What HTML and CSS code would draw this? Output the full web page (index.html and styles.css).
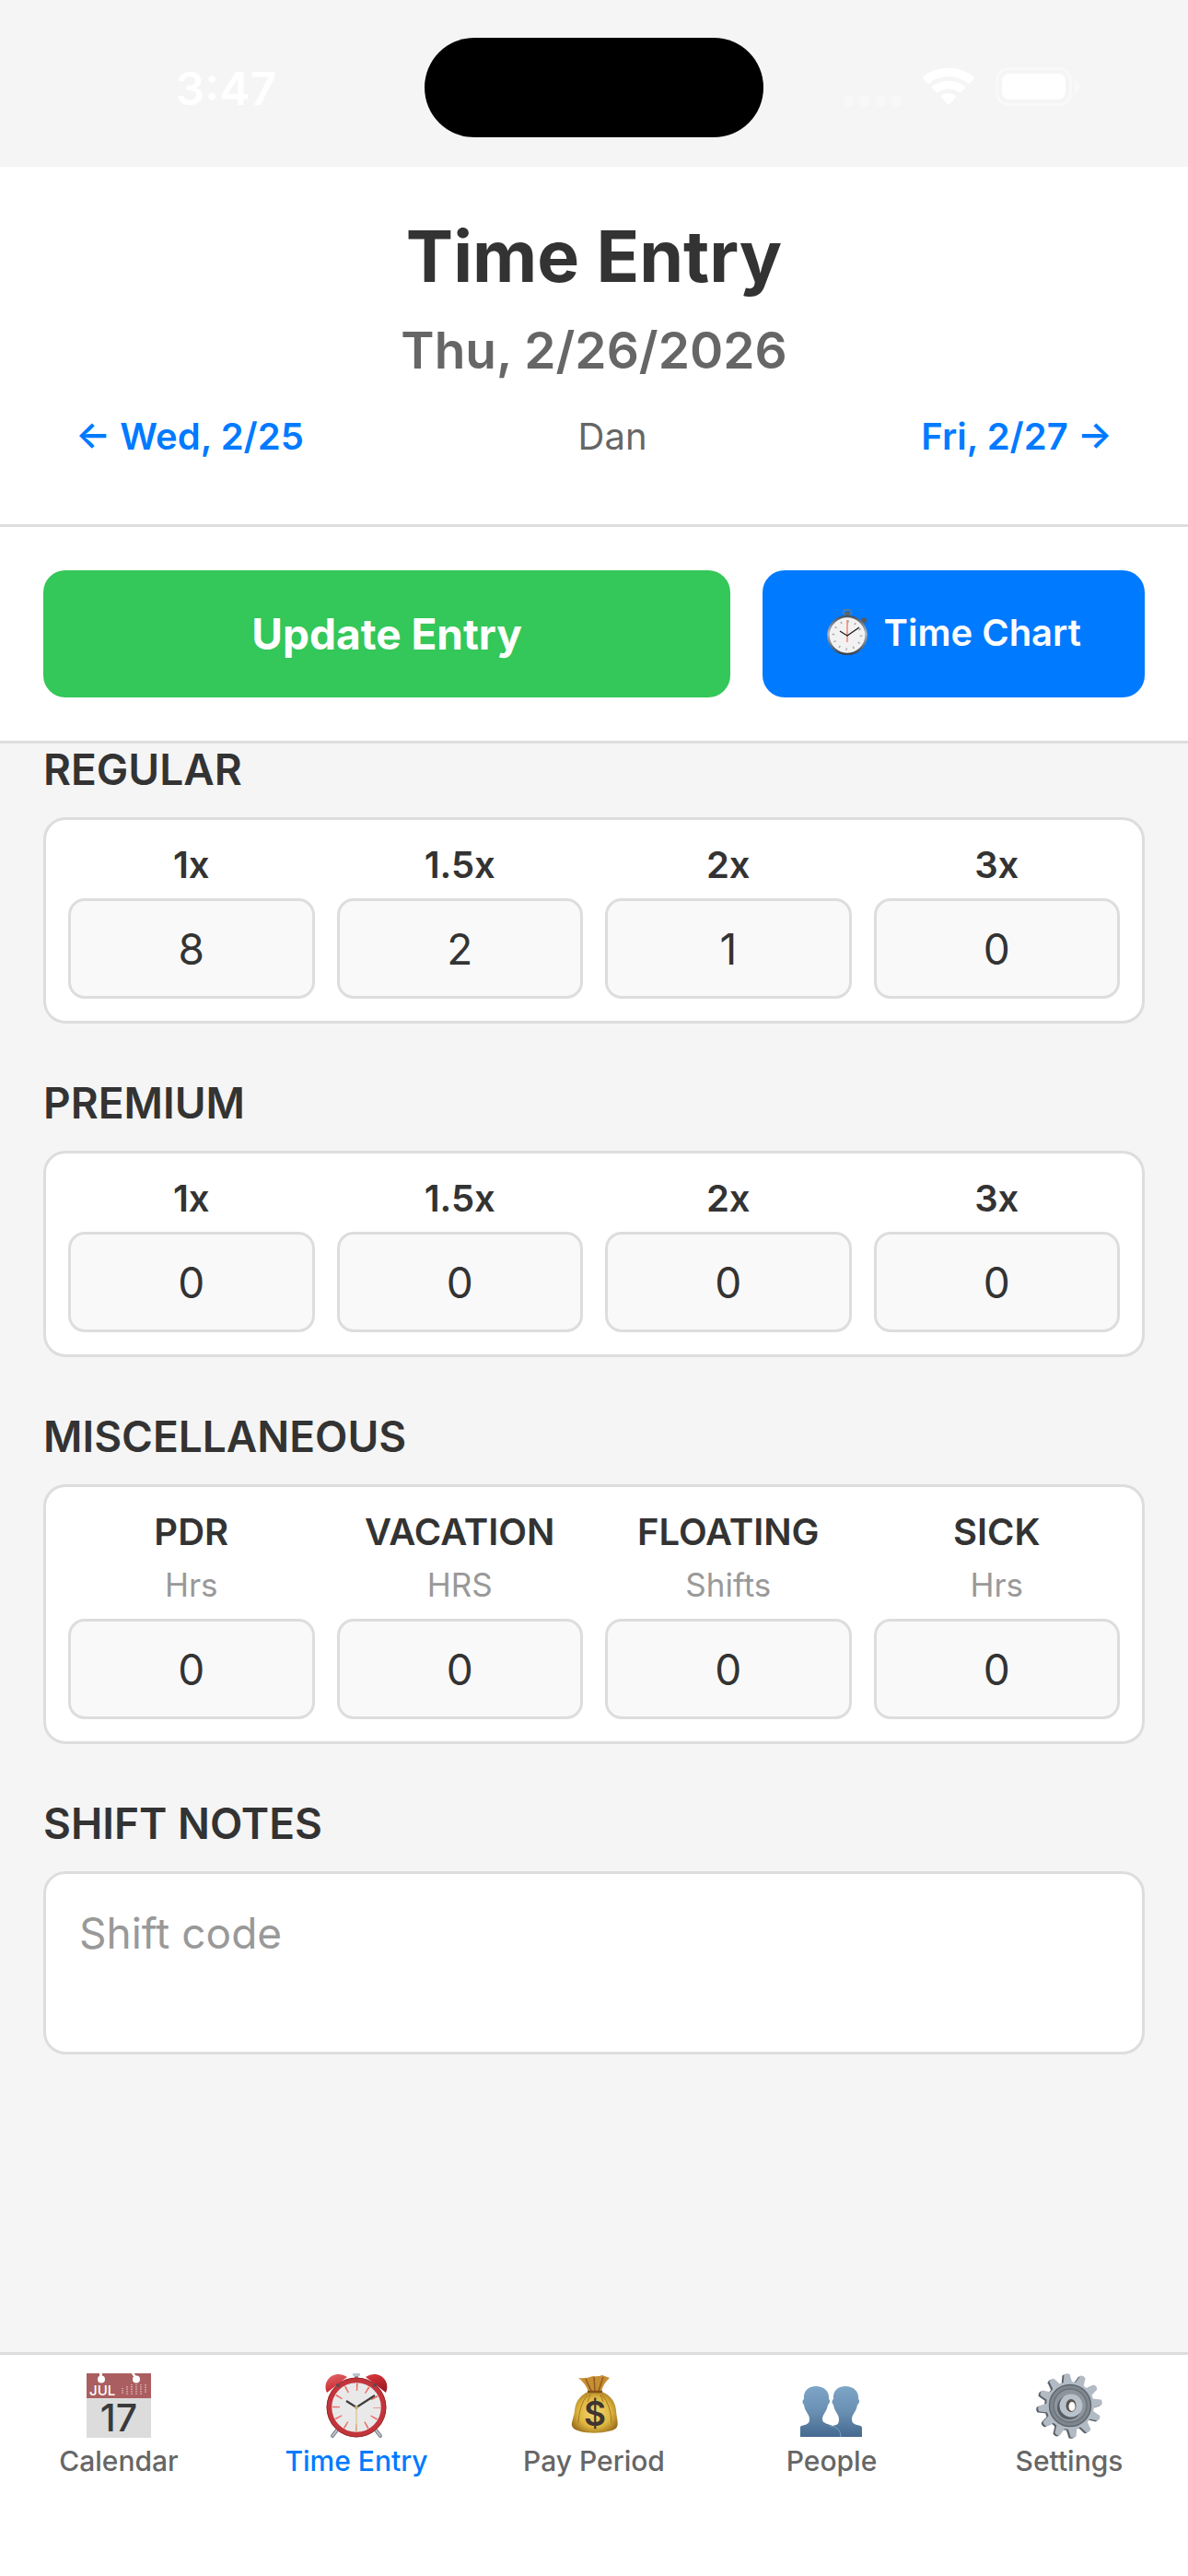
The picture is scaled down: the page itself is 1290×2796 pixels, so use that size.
FILE: index.html
```html
<!DOCTYPE html>
<html lang="en">
<head>
    <meta charset="UTF-8">
    <meta name="viewport" content="width=device-width, initial-scale=1.0">
    <title>Time Entry</title>
    <link rel="stylesheet" href="styles.css">
</head>
<body>
    <div class="status-bar">
        <div class="status-time">3:47</div>
        <div class="island"></div>
        <div class="status-icons">
            <svg width="260" height="44" viewBox="0 0 260 44" fill="#fff">
                <g opacity="0.35">
                    <rect x="5" y="31" width="11" height="11" rx="4"/>
                    <rect x="22" y="31" width="11" height="11" rx="4"/>
                    <rect x="40" y="31" width="11" height="11" rx="4"/>
                    <rect x="57" y="31" width="11" height="11" rx="4"/>
                </g>
                <path d="M92 13Q90.500 11.500 92 10C108 -2.500 130 -2.500 146 10Q147.500 11.500 146 13L142.500 17Q141 18 139.500 17C127 7.500 111 7.500 98.500 17Q97 18 95.500 17Z"/>
                <path d="M101.500 23Q100.300 21.700 101.700 20.500C111.500 12.800 126.500 12.800 136.300 20.500Q137.700 21.700 136.500 23L132.700 26.800Q131.500 27.800 130 26.800C123.500 22 114.500 22 108 26.800Q106.500 27.800 105.300 26.800Z"/>
                <path d="M111.200 32.700Q110 31.500 111.500 30.400C116 27.500 122 27.500 126.500 30.400Q128 31.500 126.800 32.700L120.500 39.500Q119 41 117.500 39.500Z"/>
                <rect x="171.500" y="1.500" width="80" height="39" rx="13" fill="none" stroke="#fff" stroke-width="3" opacity="0.4"/>
                <rect x="177" y="7" width="69" height="28" rx="8"/>
                <path d="M256 14v14q5-2 5-7t-5-7z" opacity="0.45"/>
            </svg>
        </div>
    </div>

    <header class="header">
        <h1>Time Entry</h1>
        <h2>Thu, 2/26/2026</h2>
        <div class="day-nav">
            <button type="button" class="day-link">← Wed, 2/25</button>
            <span class="user-name">Dan</span>
            <button type="button" class="day-link">Fri, 2/27 →</button>
        </div>
    </header>

    <div class="actions">
        <button type="button" class="btn btn-update">Update Entry</button>
        <button type="button" class="btn btn-chart">
            <svg width="44" height="50" viewBox="0 0 44 50">
                <defs>
                    <linearGradient id="watchRim" x1="0" y1="0" x2="0" y2="1">
                        <stop offset="0" stop-color="#4d5560"/>
                        <stop offset="0.45" stop-color="#b4b9c0"/>
                        <stop offset="1" stop-color="#394552"/>
                    </linearGradient>
                </defs>
                <ellipse cx="22" cy="3.500" rx="4.500" ry="3" fill="none" stroke="#6f7b86" stroke-width="1.500"/>
                <rect x="19.500" y="3" width="5" height="6" rx="1" fill="#59636e"/>
                <path d="M37 15l4-5" stroke="#5c6068" stroke-width="3"/>
                <rect x="37.500" y="9.500" width="6" height="5" rx="2" fill="#555a63" transform="rotate(35 40 12)"/>
                <circle cx="22" cy="28.500" r="20.500" fill="#f2f2f2" stroke="url(#watchRim)" stroke-width="2.500"/>
                <circle cx="22" cy="28.500" r="15" fill="none" stroke="#aaa" stroke-width="2.500" stroke-dasharray="1.500 6.354"/>
                <path d="M22 12v24" stroke="#ee6a4b" stroke-width="1.200"/>
                <path d="M14 24l8 5 13-9" fill="none" stroke="#222" stroke-width="1.400"/>
            </svg>
            <span>Time Chart</span>
        </button>
    </div>

    <main class="content">
        <section class="section">
            <h3>REGULAR</h3>
            <div class="card">
                <div class="field">
                    <label for="reg1">1x</label>
                    <input type="text" id="reg1" value="8">
                </div>
                <div class="field">
                    <label for="reg15">1.5x</label>
                    <input type="text" id="reg15" value="2">
                </div>
                <div class="field">
                    <label for="reg2">2x</label>
                    <input type="text" id="reg2" value="1">
                </div>
                <div class="field">
                    <label for="reg3">3x</label>
                    <input type="text" id="reg3" value="0">
                </div>
            </div>
        </section>

        <section class="section">
            <h3>PREMIUM</h3>
            <div class="card">
                <div class="field">
                    <label for="prem1">1x</label>
                    <input type="text" id="prem1" value="0">
                </div>
                <div class="field">
                    <label for="prem15">1.5x</label>
                    <input type="text" id="prem15" value="0">
                </div>
                <div class="field">
                    <label for="prem2">2x</label>
                    <input type="text" id="prem2" value="0">
                </div>
                <div class="field">
                    <label for="prem3">3x</label>
                    <input type="text" id="prem3" value="0">
                </div>
            </div>
        </section>

        <section class="section">
            <h3>MISCELLANEOUS</h3>
            <div class="card">
                <div class="field">
                    <label for="pdr">PDR</label>
                    <span class="unit">Hrs</span>
                    <input type="text" id="pdr" value="0">
                </div>
                <div class="field">
                    <label for="vacation">VACATION</label>
                    <span class="unit">HRS</span>
                    <input type="text" id="vacation" value="0">
                </div>
                <div class="field">
                    <label for="floating">FLOATING</label>
                    <span class="unit">Shifts</span>
                    <input type="text" id="floating" value="0">
                </div>
                <div class="field">
                    <label for="sick">SICK</label>
                    <span class="unit">Hrs</span>
                    <input type="text" id="sick" value="0">
                </div>
            </div>
        </section>

        <section class="section">
            <h3><label for="notes">SHIFT NOTES</label></h3>
            <textarea id="notes" placeholder="Shift code"></textarea>
        </section>
    </main>

    <nav class="tab-bar">
        <a href="#calendar" class="tab">
            <svg class="tab-icon" viewBox="0 0 72 72">
                <rect x="1" y="1" width="70" height="28" fill="#ab5e60"/>
                <rect x="1" y="28" width="70" height="43" fill="#dcdcdc"/>
                <path d="M15 0h3v6h-3zM49 0h3l4 6h-3z" fill="#fff"/>
                <circle cx="17" cy="7.500" r="4" fill="#fff"/>
                <circle cx="55" cy="7.500" r="4" fill="#fff"/>
                <path d="M40 23v-6M45 24v-9M50 24v-11M55 24v-11M60 24v-11M65 22v-9" stroke="#cf9c9d" stroke-width="2" stroke-dasharray="1.500 1"/>
                <text x="4" y="25" class="cal-month">JUL</text>
                <text x="36" y="64" class="cal-day">17</text>
            </svg>
            <span>Calendar</span>
        </a>
        <a href="#time-entry" class="tab active">
            <svg class="tab-icon" viewBox="0 0 72 72">
                <defs>
                    <linearGradient id="bell" x1="0" y1="0" x2="1" y2="1">
                        <stop offset="0" stop-color="#e0696b"/>
                        <stop offset="0.5" stop-color="#cc2c33"/>
                        <stop offset="1" stop-color="#8f1820"/>
                    </linearGradient>
                </defs>
                <path d="M17 60l-7 9M55 60l7 9" stroke="#7f8891" stroke-width="4" stroke-linecap="round"/>
                <path d="M17 60l-7 9M55 60l7 9" stroke="#c4cbd1" stroke-width="1.500" stroke-linecap="round"/>
                <path d="M36 3v9" stroke="#8e979f" stroke-width="4"/>
                <rect x="32" y="1" width="8" height="3" rx="1" fill="#b9c6d0"/>
                <path d="M4 22C-2 9 12-4 26 5zM68 22C74 9 60-4 46 5z" fill="url(#bell)"/>
                <circle cx="36" cy="38" r="29.500" fill="#e9e9e9" stroke="#c2353b" stroke-width="5.500"/>
                <circle cx="36" cy="38" r="32" fill="none" stroke="#98252c" stroke-width="1"/>
                <circle cx="36" cy="38" r="22" fill="none" stroke="#ec6a63" stroke-width="8" stroke-dasharray="1.500 10.019" stroke-dashoffset="0.750"/>
                <path d="M36 38v26" stroke="#dfc58e" stroke-width="1.300"/>
                <path d="M25 31l11 7 20-13" fill="none" stroke="#3c3c3c" stroke-width="2.200"/>
                <circle cx="36" cy="38" r="2" fill="#c9ab72"/>
                <circle cx="16" cy="14" r="2" fill="#5b4c54"/>
                <circle cx="56" cy="14" r="2" fill="#5b4c54"/>
            </svg>
            <span>Time Entry</span>
        </a>
        <a href="#pay-period" class="tab">
            <svg class="tab-icon" viewBox="0 0 72 72">
                <defs>
                    <radialGradient id="bag" cx="0.5" cy="0.5" r="0.6">
                        <stop offset="0" stop-color="#f2d873"/>
                        <stop offset="0.6" stop-color="#dfb63f"/>
                        <stop offset="1" stop-color="#94681a"/>
                    </radialGradient>
                </defs>
                <path d="M19 6q8 1 16-2 5 1 10-1l8 3q-7 6-9 15H30Q27 12 19 6z" fill="#c78e34"/>
                <path d="M27 7l6 13M36 5l1 15M46 5l-5 15" stroke="#8f5d1b" stroke-width="1.500"/>
                <path d="M30 21h14c9 3 15 10 16 20 0 6 3 14 1 18-2 8-46 10-49-1-1-4 3-12 3-17 1-10 7-17 15-20z" fill="url(#bag)"/>
                <path d="M29 21h16" stroke="#83501a" stroke-width="2.500"/>
                <path d="M29 25q-9 9-10 30M45 25q9 9 10 30M32 24l-3 8M43 24l3 8" fill="none" stroke="#a67822" stroke-width="1"/>
                <text x="37" y="58" class="bag-sign">$</text>
            </svg>
            <span>Pay Period</span>
        </a>
        <a href="#people" class="tab">
            <svg class="tab-icon" viewBox="0 0 72 72">
                <defs>
                    <linearGradient id="bust" x1="0" y1="14" x2="0" y2="70" gradientUnits="userSpaceOnUse">
                        <stop offset="0" stop-color="#7ea6c7"/>
                        <stop offset="0.500" stop-color="#6a90b3"/>
                        <stop offset="1" stop-color="#45698f"/>
                    </linearGradient>
                </defs>
                <path d="M38 35c-2-1-2-5 0-6-1-9 5-14 13-14s15 5 14 14c2 1 1 5-1 6-1 8-6 10-6 16 0 8 11 5 11 9v10H33V60c4-4 11 0 11-9 0-6-5-8-6-16z" fill="url(#bust)"/>
                <path d="M6 35c-2-1-2-5 0-6-1-9 5-14 13-14s15 5 14 14c2 1 1 5-1 6-1 8-6 10-6 16 0 8 20 3 20 19H2V60c0-4 10-1 10-9 0-6-5-8-6-16z" fill="url(#bust)"/>
                <path d="M34 58q12 1 12 12" fill="none" stroke="#6fa3c2" stroke-width="1"/>
            </svg>
            <span>People</span>
        </a>
        <a href="#settings" class="tab">
            <svg class="tab-icon" viewBox="0 0 72 72">
                <defs>
                    <path id="tooth" d="M31 12l2-10q3-2 6 0l2 10z"/>
                    <g id="teeth">
                        <use href="#tooth" transform="rotate(-6 36 36)"/>
                        <use href="#tooth" transform="rotate(24 36 36)"/>
                        <use href="#tooth" transform="rotate(54 36 36)"/>
                        <use href="#tooth" transform="rotate(84 36 36)"/>
                        <use href="#tooth" transform="rotate(114 36 36)"/>
                        <use href="#tooth" transform="rotate(144 36 36)"/>
                        <use href="#tooth" transform="rotate(174 36 36)"/>
                        <use href="#tooth" transform="rotate(204 36 36)"/>
                        <use href="#tooth" transform="rotate(234 36 36)"/>
                        <use href="#tooth" transform="rotate(264 36 36)"/>
                        <use href="#tooth" transform="rotate(294 36 36)"/>
                        <use href="#tooth" transform="rotate(324 36 36)"/>
                    </g>
                </defs>
                <g fill="#59616a" transform="translate(-1 1)">
                    <use href="#teeth"/>
                    <circle cx="36" cy="36" r="26"/>
                </g>
                <g fill="#b2bac4" transform="translate(1 0)">
                    <use href="#teeth"/>
                    <circle cx="36" cy="36" r="26"/>
                </g>
                <circle cx="37" cy="36" r="22.500" fill="#7f878f" stroke="#5f666d" stroke-width="1.500"/>
                <circle cx="37" cy="36" r="18" fill="#8d949c" stroke="#6c737a" stroke-width="1.500"/>
                <circle cx="36" cy="38" r="13" fill="#575d64"/>
                <circle cx="38" cy="36" r="12.500" fill="#b9c1ca"/>
                <ellipse cx="38" cy="36" rx="5.500" ry="7" fill="#5a5550"/>
                <ellipse cx="39" cy="37" rx="3.500" ry="5" fill="#fff"/>
            </svg>
            <span>Settings</span>
        </a>
    </nav>
</body>
</html>
```
FILE: styles.css
```css
* {
    margin: 0;
    padding: 0;
    box-sizing: border-box;
}

body {
    font-family: Inter, "Liberation Sans", sans-serif;
    background: #f5f5f5;
    color: #333;
    min-height: 100vh;
    display: flex;
    flex-direction: column;
}

button,
input,
textarea {
    font-family: inherit;
}

/* Status bar */
.status-bar {
    display: grid;
    grid-template-columns: 1fr 368px 1fr;
    height: 181px;
    padding-top: 41px;
    color: #fff;
}

.status-time {
    padding-left: 30px;
    text-align: center;
    font-size: 50px;
    font-weight: 600;
    line-height: 110px;
}

.island {
    height: 108px;
    border-radius: 54px;
    background: #000;
}

.status-icons {
    display: flex;
    justify-content: flex-end;
    padding: 32px 119px 0 0;
}

.status-icons svg {
    flex: none;
    overflow: visible;
}

/* Header */
.header {
    background: #fff;
    border-bottom: 3px solid #ddd;
    padding: 47px 82px 70px;
    text-align: center;
}

h1 {
    font-size: 77px;
    font-weight: 700;
    line-height: 100px;
}

h2 {
    margin-top: 16px;
    color: #666;
    font-size: 55px;
    font-weight: 600;
    line-height: 72px;
}

.day-nav {
    display: flex;
    justify-content: space-between;
    margin-top: 33px;
    font-size: 40px;
    line-height: 50px;
}

.day-link {
    background: none;
    border: none;
    color: #007aff;
    font-size: 40px;
    font-weight: 600;
    line-height: 50px;
    cursor: pointer;
}

.user-name {
    color: #666;
}

/* Action buttons */
.actions {
    display: flex;
    gap: 35px;
    background: #fff;
    border-bottom: 3px solid #ddd;
    padding: 47px;
}

.btn {
    display: flex;
    align-items: center;
    justify-content: center;
    height: 138px;
    border: none;
    border-radius: 24px;
    color: #fff;
    cursor: pointer;
}

.btn-update {
    flex: 9;
    background: #34c759;
    font-size: 46px;
    font-weight: 700;
}

.btn-chart {
    flex: 5;
    gap: 18px;
    background: #007aff;
    padding-bottom: 4px;
    font-size: 40px;
    font-weight: 600;
}

/* Entry form */
.content {
    flex: 1;
    padding: 0 47px;
}

.section {
    margin-bottom: 58px;
}

h3 {
    margin-bottom: 23px;
    font-size: 46px;
    font-weight: 600;
    line-height: 57px;
}

.card {
    display: grid;
    grid-template-columns: repeat(4, 1fr);
    gap: 24px;
    background: #fff;
    border: 3px solid #ddd;
    border-radius: 24px;
    padding: 24px;
}

.field {
    display: flex;
    flex-direction: column;
    text-align: center;
}

.field label {
    margin-bottom: 12px;
    font-size: 40px;
    font-weight: 600;
    line-height: 49px;
}

.unit {
    margin-bottom: 16px;
    color: #999;
    font-size: 35px;
    line-height: 42px;
}

.field input {
    width: 100%;
    height: 109px;
    background: #f9f9f9;
    border: 3px solid #ddd;
    border-radius: 18px;
    color: #333;
    font-size: 46px;
    text-align: center;
}

textarea {
    display: block;
    width: 100%;
    height: 199px;
    background: #fff;
    border: 3px solid #ddd;
    border-radius: 24px;
    padding: 35px 36px;
    font-size: 46px;
    line-height: 58px;
    resize: none;
}

textarea::placeholder {
    color: #999;
}

/* Bottom tabs */
.tab-bar {
    display: grid;
    grid-template-columns: repeat(5, 1fr);
    background: #fff;
    border-top: 3px solid #ddd;
    padding: 19px 0 107px;
}

.tab {
    display: flex;
    flex-direction: column;
    align-items: center;
    gap: 6px;
    color: #666;
    font-size: 30px;
    font-weight: 500;
    line-height: 36px;
    text-decoration: none;
}

.tab.active {
    color: #007aff;
}

.tab-icon {
    width: 72px;
    height: 72px;
    overflow: visible;
}

.cal-month {
    fill: #fff;
    font-size: 15px;
}

.cal-day {
    fill: #3a3a3a;
    font-size: 41px;
    font-weight: 500;
    text-anchor: middle;
}

.bag-sign {
    fill: #40352f;
    font-size: 37px;
    font-weight: 600;
    text-anchor: middle;
}
```
